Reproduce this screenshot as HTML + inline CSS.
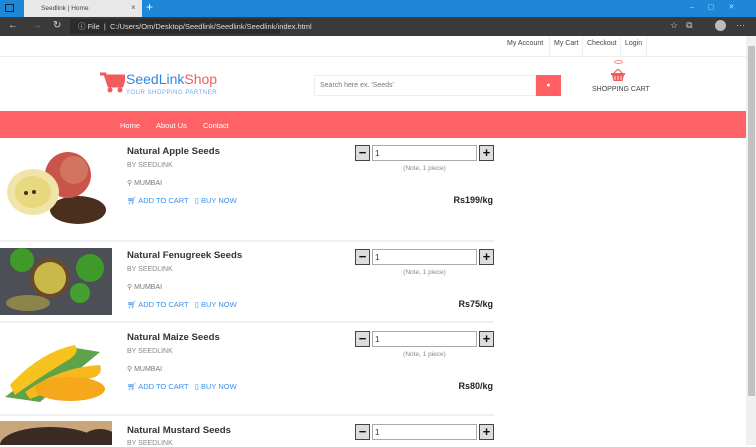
<!DOCTYPE html>
<html><head><meta charset="utf-8"><style>
*{margin:0;padding:0;box-sizing:border-box}
body{width:756px;height:445px;overflow:hidden;position:relative;background:#fff;font-family:"Liberation Sans",sans-serif;color:#333}
.a{position:absolute}
.t{font-size:9.6px;font-weight:bold;color:#333;left:127px}
.by{font-size:7px;color:#888;left:127px}
.mu{font-size:7px;color:#777;left:127px}
.ac{font-size:7.5px;color:#3a8fe8;left:127px}
.pr{font-size:9px;font-weight:bold;color:#222;right:263px}
.bt{width:15px;height:16px;border:1px solid #444;background:#ddd;font-size:13px;font-weight:bold;text-align:center;line-height:14px;color:#111}
.in{left:372px;width:105px;height:16px;border:1px solid #aaa;font-size:8px;padding:3px 2px;color:#333}
.nt{font-size:6.5px;color:#888;left:372px;width:105px;text-align:center}
.sep{left:0;width:494px;height:2px;background:#f0f0f0}
</style></head><body>
<div class="a" style="left:0;top:0;width:756px;height:17px;background:#1f87d8"></div>
<div class="a" style="left:24px;top:0;width:118px;height:17px;background:#e8e8e8"></div>
<div class="a" style="left:5px;top:4px;width:9px;height:8px;border:1.5px solid #123"></div>
<div class="a" style="left:41px;top:5px;font-size:6.5px;color:#444">Seedlink | Home</div>
<div class="a" style="left:131px;top:3px;font-size:8px;color:#555">×</div>
<div class="a" style="left:146px;top:0px;font-size:12px;color:#fff">+</div>
<div class="a" style="left:690px;top:3px;font-size:7px;color:#cde;letter-spacing:14px">–▢✕</div>
<div class="a" style="left:0;top:17px;width:756px;height:19px;background:#3a3a3a"></div>
<div class="a" style="left:70px;top:19px;width:210px;height:15px;background:#2c2c2c"></div>
<div class="a" style="left:8px;top:20px;font-size:10px;color:#ddd">←</div>
<div class="a" style="left:32px;top:20px;font-size:10px;color:#777">→</div>
<div class="a" style="left:53px;top:20px;font-size:10px;color:#ddd">↻</div>
<div class="a" style="left:78px;top:21px;font-size:7.5px;color:#ddd">ⓘ File &nbsp;| &nbsp;C:/Users/Om/Desktop/Seedlink/Seedlink/Seedlink/index.html</div>
<div class="a" style="left:715px;top:20px;width:11px;height:11px;border-radius:50%;background:#bbb"></div>
<div class="a" style="left:670px;top:20px;font-size:9px;color:#ccc;letter-spacing:8px">☆⧉</div>
<div class="a" style="left:736px;top:20px;font-size:9px;color:#ccc">···</div>
<div class="a" style="left:746px;top:36px;width:10px;height:409px;background:#f0f0f0"></div>
<div class="a" style="left:748px;top:46px;width:7px;height:350px;background:#c1c1c1"></div>
<div class="a" style="left:0;top:56px;width:746px;height:1px;background:#eee"></div>
<div class="a" style="left:507px;top:40px;font-size:7px;color:#444">My Account</div>
<div class="a" style="left:549px;top:36px;width:1px;height:20px;background:#eee"></div>
<div class="a" style="left:554px;top:40px;font-size:7px;color:#444">My Cart</div>
<div class="a" style="left:582px;top:36px;width:1px;height:20px;background:#eee"></div>
<div class="a" style="left:587px;top:40px;font-size:7px;color:#444">Checkout</div>
<div class="a" style="left:620px;top:36px;width:1px;height:20px;background:#eee"></div>
<div class="a" style="left:625px;top:40px;font-size:7px;color:#444">Login</div>
<div class="a" style="left:646px;top:36px;width:1px;height:20px;background:#eee"></div>
<svg class="a" style="left:100px;top:72px" width="25" height="22" viewBox="0 0 25 22"><path d="M0 2h5l4 12h13l3-10H7" fill="none" stroke="#f25c5c" stroke-width="3"/><rect x="8" y="5" width="15" height="8" fill="#f25c5c"/><circle cx="10" cy="18" r="2.5" fill="#f25c5c"/><circle cx="20" cy="18" r="2.5" fill="#f25c5c"/></svg>
<div class="a" style="left:126px;top:71px;font-size:14px;color:#2f86e8">SeedLink<span style="color:#f25c5c">Shop</span></div>
<div class="a" style="left:126px;top:90px;font-size:6px;color:#6ea9ee;letter-spacing:.5px">YOUR SHOPPING PARTNER</div>
<div class="a" style="left:314px;top:75px;width:222px;height:21px;border:1px solid #eee;font-size:7px;color:#777;padding:6px 5px">Search here ex. 'Seeds'</div>
<div class="a" style="left:536px;top:75px;width:25px;height:21px;background:#ff5e62;color:#fff;font-size:7px;text-align:center;line-height:21px">●</div>
<div class="a" style="left:614px;top:60px;width:9px;height:4px;border:1px solid #f88;border-radius:50%"></div>
<svg class="a" style="left:611px;top:69px" width="14" height="12" viewBox="0 0 14 12"><path d="M3 4 L7 0 L11 4" fill="none" stroke="#f25c5c" stroke-width="1.2"/><rect x="0" y="4" width="14" height="2" fill="#f25c5c"/><path d="M1 6h12l-1.5 6h-9z" fill="#f25c5c"/><path d="M4 7v4M7 7v4M10 7v4" stroke="#fff" stroke-width=".8"/></svg>
<div class="a" style="left:592px;top:86px;font-size:7px;color:#444">SHOPPING CART</div>
<div class="a" style="left:0;top:111px;width:746px;height:27px;background:#ff6266"></div>
<div class="a" style="left:120px;top:121px;font-size:7.5px;color:#fff">Home</div>
<div class="a" style="left:156px;top:121px;font-size:7.5px;color:#fff">About Us</div>
<div class="a" style="left:203px;top:121px;font-size:7.5px;color:#fff">Contact</div>
<svg class="a" style="left:0;top:140px" width="112" height="93" viewBox="0 0 112 93"><rect width="112" height="93" fill="#fff"/><ellipse cx="78" cy="70" rx="28" ry="14" fill="#4a2e1e"/><circle cx="68" cy="35" r="23" fill="#c9554a"/><circle cx="74" cy="30" r="14" fill="#d88a70" opacity=".6"/><ellipse cx="33" cy="52" rx="26" ry="23" fill="#f1e4a8"/><ellipse cx="33" cy="52" rx="18" ry="16" fill="#e8d880"/><circle cx="26" cy="53" r="2" fill="#4a2e1e"/><circle cx="34" cy="52" r="2" fill="#4a2e1e"/></svg>
<div class="a sep" style="top:240px"></div>
<svg class="a" style="left:0;top:248px" width="112" height="67" viewBox="0 0 112 67"><rect width="112" height="67" fill="#4c4f55"/><circle cx="22" cy="12" r="12" fill="#3f9a2a"/><circle cx="90" cy="20" r="14" fill="#3f9a2a"/><circle cx="80" cy="45" r="10" fill="#45a030"/><circle cx="50" cy="30" r="20" fill="#6b4a2a"/><circle cx="50" cy="30" r="16" fill="#c9b84a"/><ellipse cx="28" cy="55" rx="22" ry="8" fill="#b8a845" opacity=".6"/></svg>
<div class="a sep" style="top:321px"></div>
<svg class="a" style="left:0;top:327px" width="112" height="83" viewBox="0 0 112 83"><rect width="112" height="83" fill="#fff"/><path d="M5 70 L70 20 L100 25 L40 75z" fill="#5ea34a"/><path d="M10 58 Q40 25 75 18 Q80 25 70 32 Q40 50 15 68z" fill="#f5c21e"/><path d="M25 65 Q60 40 100 38 Q103 46 95 50 Q60 60 30 72z" fill="#f7b81c"/><ellipse cx="70" cy="62" rx="35" ry="12" fill="#f4a81a"/></svg>
<div class="a sep" style="top:414px"></div>
<svg class="a" style="left:0;top:421px" width="112" height="24" viewBox="0 0 112 24"><rect width="112" height="24" fill="#c9a57c"/><ellipse cx="50" cy="24" rx="50" ry="18" fill="#3a2a22"/><ellipse cx="100" cy="22" rx="20" ry="14" fill="#3a2a22"/></svg>
<div class="a t" style="top:146px">Natural Apple Seeds</div>
<div class="a by" style="top:162px">BY SEEDLINK</div>
<div class="a mu" style="top:179px">⚲ MUMBAI</div>
<div class="a ac" style="top:196px">🛒︎ ADD TO CART &nbsp;&nbsp;▯ BUY NOW</div>
<div class="a pr" style="top:195px">Rs199/kg</div>
<div class="a bt" style="left:355px;top:145px">−</div><div class="a in" style="top:145px">1</div><div class="a bt" style="left:479px;top:145px">+</div>
<div class="a nt" style="top:165px">(Note, 1 piece)</div>
<div class="a t" style="top:250px">Natural Fenugreek Seeds</div>
<div class="a by" style="top:266px">BY SEEDLINK</div>
<div class="a mu" style="top:283px">⚲ MUMBAI</div>
<div class="a ac" style="top:300px">🛒︎ ADD TO CART &nbsp;&nbsp;▯ BUY NOW</div>
<div class="a pr" style="top:299px">Rs75/kg</div>
<div class="a bt" style="left:355px;top:249px">−</div><div class="a in" style="top:249px">1</div><div class="a bt" style="left:479px;top:249px">+</div>
<div class="a nt" style="top:269px">(Note, 1 piece)</div>
<div class="a t" style="top:332px">Natural Maize Seeds</div>
<div class="a by" style="top:348px">BY SEEDLINK</div>
<div class="a mu" style="top:365px">⚲ MUMBAI</div>
<div class="a ac" style="top:382px">🛒︎ ADD TO CART &nbsp;&nbsp;▯ BUY NOW</div>
<div class="a pr" style="top:381px">Rs80/kg</div>
<div class="a bt" style="left:355px;top:331px">−</div><div class="a in" style="top:331px">1</div><div class="a bt" style="left:479px;top:331px">+</div>
<div class="a nt" style="top:351px">(Note, 1 piece)</div>
<div class="a t" style="top:425px">Natural Mustard Seeds</div>
<div class="a by" style="top:440px">BY SEEDLINK</div>
<div class="a bt" style="left:355px;top:424px">−</div><div class="a in" style="top:424px">1</div><div class="a bt" style="left:479px;top:424px">+</div>
</body></html>
